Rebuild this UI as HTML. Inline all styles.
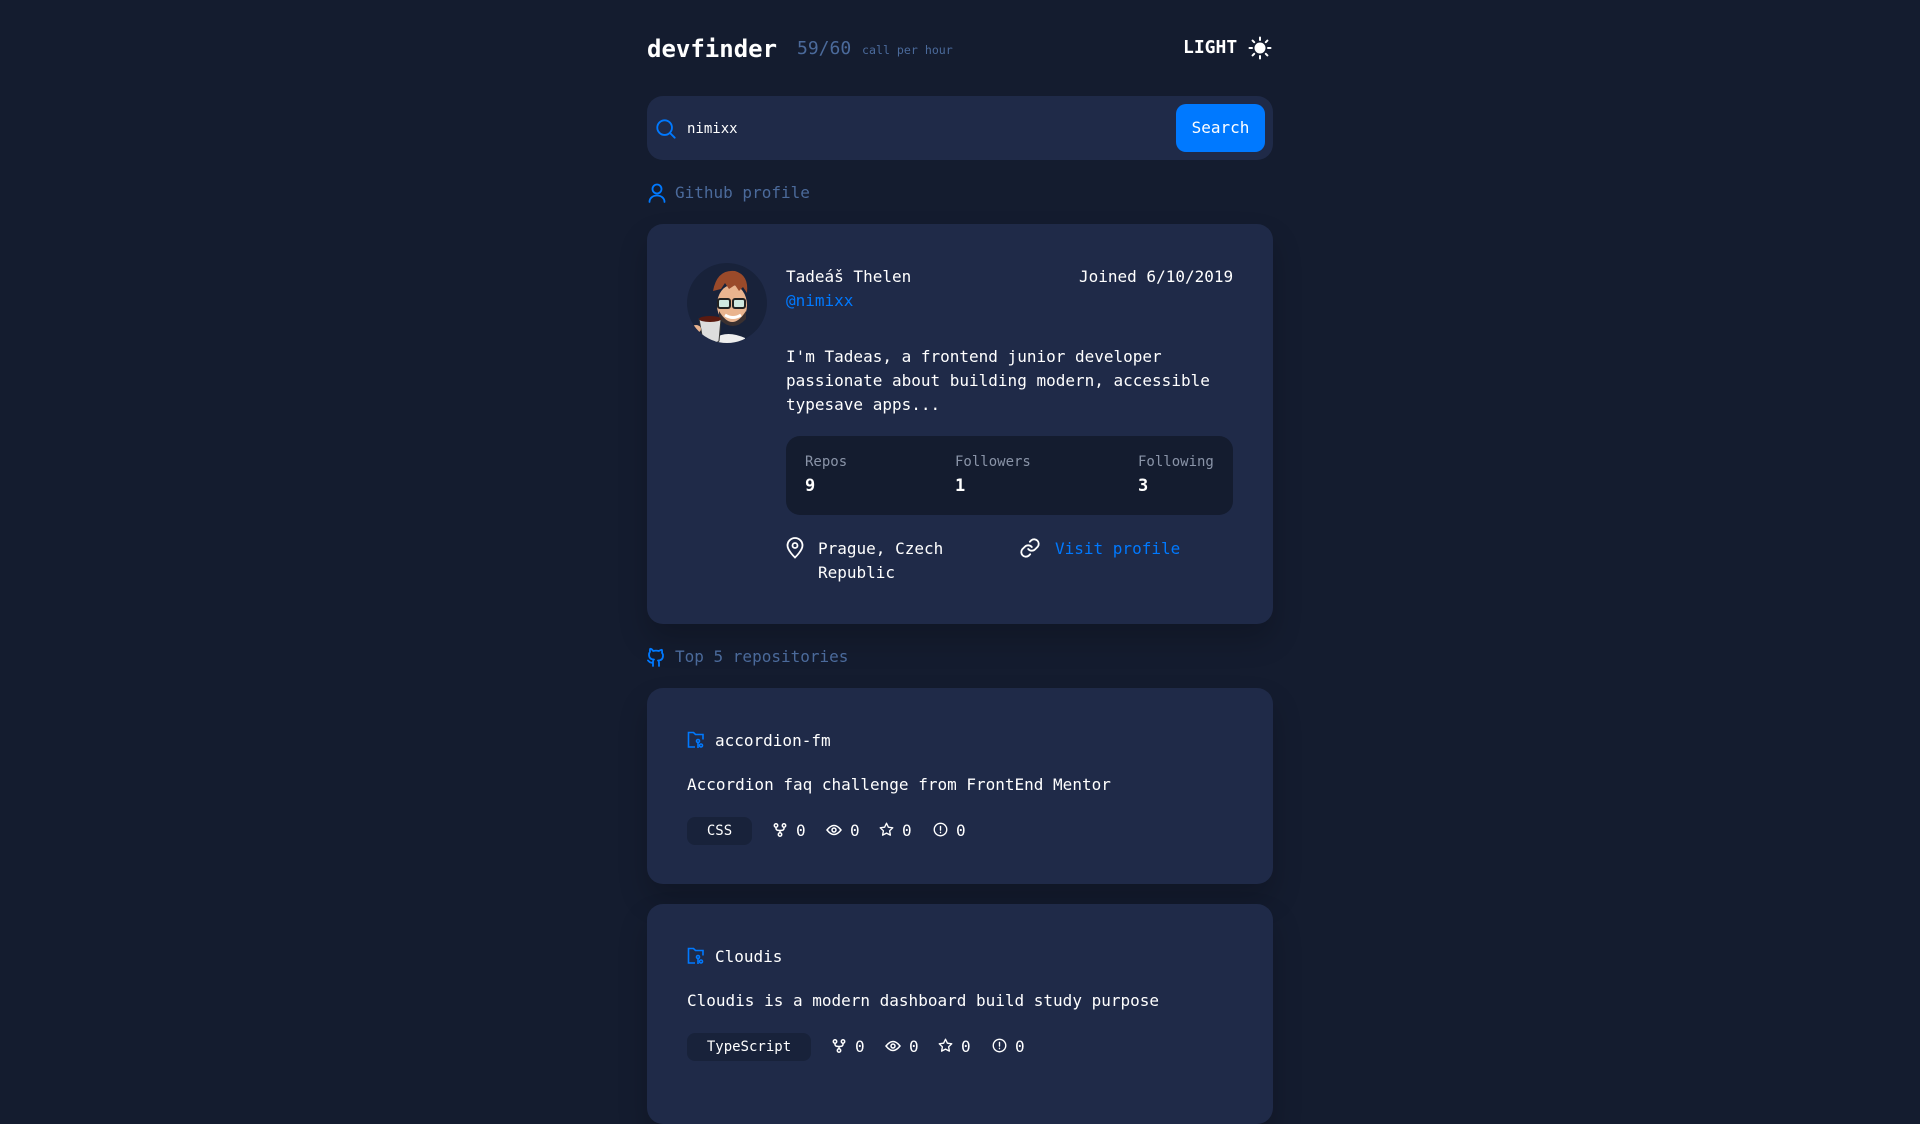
<!DOCTYPE html>
<html><head><meta charset="utf-8"><style>
*{margin:0;padding:0;box-sizing:border-box}
body{width:1920px;height:1080px;background:#141c2f;font-family:"DejaVu Sans Mono","Liberation Mono",monospace;color:#fff;position:relative;overflow:hidden}
.a{position:absolute;white-space:nowrap}
.card{position:absolute;left:647px;width:626px;background:#1f2a48;border-radius:16px;box-shadow:0 16px 30px rgba(0,0,0,.2)}
.lbl{color:#4b6a9b;font-size:16px}
.sl{color:#8a94a8;font-size:14px}
.sv{font-size:17px;font-weight:bold}
.badge{position:absolute;background:#18223a;border-radius:8px;font-size:14px;text-align:center;line-height:28px;height:28px}
.st{font-size:16px;line-height:22px}
svg{position:absolute}
</style></head><body>
<div class="a" style="left:647px;top:31px;font-size:24px;font-weight:bold;line-height:36px">devfinder</div>
<div class="a" style="left:797px;top:37px;font-size:18px;color:#4b6a9b;line-height:24px">59/60 <span style="font-size:11.6px">call per hour</span></div>
<div class="a" style="left:1183px;top:36px;font-size:18px;font-weight:bold;line-height:24px">LIGHT</div>
<svg style="left:1248px;top:36px" width="24" height="24" viewBox="0 0 24 24" fill="none" stroke="#fff" stroke-width="2" stroke-linecap="round"><circle cx="12" cy="12" r="4.5" fill="#fff"/><path d="M12 1.5v2.5M12 20v2.5M1.5 12h2.5M20 12h2.5M4.6 4.6l1.6 1.6M17.8 17.8l1.6 1.6M4.6 19.4l1.6-1.6M17.8 6.2l1.6-1.6"/></svg>

<div class="card" style="top:96px;height:64px;box-shadow:none"></div>
<svg style="left:655px;top:118px" width="22" height="22" viewBox="0 0 24 24" fill="none" stroke="#0079ff" stroke-width="2" stroke-linecap="round"><circle cx="10.5" cy="10.5" r="8"/><path d="M16.5 16.5l5 5"/></svg>
<div class="a" style="left:687px;top:119px;font-size:14px;line-height:20px">nimixx</div>
<div class="a" style="left:1176px;top:104px;width:89px;height:48px;background:#0079ff;border-radius:10px;font-size:16px;line-height:48px;text-align:center">Search</div>

<svg style="left:648px;top:183px" width="18" height="20" viewBox="0 0 18 20" fill="none" stroke="#0079ff" stroke-width="1.8" stroke-linecap="round"><circle cx="9" cy="6" r="4.5"/><path d="M1.5 19c0-4 3.4-6.5 7.5-6.5s7.5 2.5 7.5 6.5"/></svg>
<div class="a lbl" style="left:675px;top:183px;line-height:20px">Github profile</div>

<div class="card" style="top:224px;height:400px"></div>
<svg style="left:687px;top:263px" width="80" height="80" viewBox="0 0 80 80"><defs><clipPath id="c"><circle cx="40" cy="40" r="40"/></clipPath></defs><circle cx="40" cy="40" r="40" fill="#18223a"/><g clip-path="url(#c)"><path d="M28 75 q12-8 30 0 v10 h-30z" fill="#eee"/><ellipse cx="45" cy="42" rx="15" ry="20" fill="#e9b48f"/><path d="M32 48 q13 22 27 0 v8 q-13 14-27 0z" fill="#3a3030"/><path d="M26 28 q4-22 22-20 q14 4 12 22 l-4-6 -4 4 -4-6 -6 4 -4-6 -4 6z" fill="#9a4a2a"/><rect x="31" y="36" width="12" height="9" rx="2" fill="#cfe8e0" stroke="#222" stroke-width="2"/><rect x="46" y="36" width="12" height="9" rx="2" fill="#cfe8e0" stroke="#222" stroke-width="2"/><path d="M38 52 q8 5 16 0" stroke="#fff" stroke-width="3" fill="none"/><path d="M12 56 l4 22 q8 6 16 0 l2-22z" fill="#ddd" stroke="#333" stroke-width="1"/><ellipse cx="23" cy="56" rx="11" ry="3" fill="#5a1a10"/><ellipse cx="9" cy="66" rx="5" ry="4" fill="#e9b48f"/></g></svg>
<div class="a" style="left:786px;top:265px;font-size:16px;line-height:24px">Tadeáš Thelen</div>
<div class="a" style="left:786px;top:289px;font-size:16px;line-height:24px;color:#0079ff">@nimixx</div>
<div class="a" style="left:1079px;top:265px;font-size:16px;line-height:24px">Joined 6/10/2019</div>
<div class="a" style="left:786px;top:345px;font-size:16px;line-height:24px;white-space:normal;width:440px">I'm Tadeas, a frontend junior developer passionate about building modern, accessible typesave apps...</div>
<div class="a" style="left:786px;top:436px;width:447px;height:79px;background:#141c2f;border-radius:14px"></div>
<div class="a sl" style="left:805px;top:454px">Repos</div>
<div class="a sv" style="left:805px;top:476px">9</div>
<div class="a sl" style="left:955px;top:454px">Followers</div>
<div class="a sv" style="left:955px;top:476px">1</div>
<div class="a sl" style="left:1138px;top:454px">Following</div>
<div class="a sv" style="left:1138px;top:476px">3</div>
<svg style="left:785px;top:537px" width="20" height="22" viewBox="0 0 20 22" fill="none" stroke="#fff" stroke-width="1.8"><path d="M10 20.5s-7.5-7-7.5-12a7.5 7.5 0 0 1 15 0c0 5-7.5 12-7.5 12z"/><circle cx="10" cy="8.5" r="2.5"/></svg>
<div class="a" style="left:818px;top:537px;font-size:16px;line-height:24px">Prague, Czech<br>Republic</div>
<svg style="left:1019px;top:537px" width="22" height="22" viewBox="0 0 24 24" fill="none" stroke="#fff" stroke-width="2" stroke-linecap="round"><path d="M10 13a5 5 0 0 0 7.5.5l3-3a5 5 0 0 0-7-7l-1.7 1.7"/><path d="M14 11a5 5 0 0 0-7.5-.5l-3 3a5 5 0 0 0 7 7l1.7-1.7"/></svg>
<div class="a" style="left:1055px;top:537px;font-size:16px;line-height:24px;color:#0079ff">Visit profile</div>

<svg style="left:647px;top:647px" width="18" height="20" viewBox="0 0 18 20" fill="none" stroke="#0079ff" stroke-width="1.8" stroke-linecap="round" stroke-linejoin="round"><path d="M6 19v-3.5c-3.5 1-4-1.5-5-2M12 19v-3c0-1 0-2-1-2.5 3 0 5-1.5 5-5 0-1-.4-2-1-2.7.2-1 .2-2-.2-3-1 0-2 .6-3 1.2a11 11 0 0 0-5.6 0C5.2 2.4 4.2 1.8 3.2 1.8c-.4 1-.4 2-.2 3-.6.7-1 1.7-1 2.7 0 3.5 2 5 5 5-1 .5-1 1.5-1 2.5"/></svg>
<div class="a lbl" style="left:675px;top:647px;line-height:20px">Top 5 repositories</div>

<!-- repo 1 -->
<div class="card" style="top:688px;height:196px"></div>
<svg style="left:687px;top:731px" width="18" height="18" viewBox="0 0 18 18" fill="none" stroke="#0079ff" stroke-width="1.6"><path d="M8 16H1.5V1.5h5l2 2h7.5v5"/><circle cx="11" cy="10" r="1.5"/><circle cx="14" cy="14.5" r="1.5"/><path d="M11 11.5v5.5"/></svg>
<div class="a" style="left:715px;top:730px;font-size:16px;line-height:22px">accordion-fm</div>
<div class="a" style="left:687px;top:774px;font-size:16px;line-height:22px">Accordion faq challenge from FrontEnd Mentor</div>
<div class="badge" style="left:687px;top:817px;width:65px">CSS</div>
<svg style="left:773px;top:823px" width="14" height="14" viewBox="0 0 14 14" fill="none" stroke="#fff" stroke-width="1.5"><circle cx="3" cy="2.5" r="1.7"/><circle cx="11" cy="2.5" r="1.7"/><circle cx="7" cy="11.5" r="1.7"/><path d="M3 4.2v1.3q0 2 4 2t4-2V4.2M7 7.5v2.3"/></svg>
<div class="a st" style="left:796px;top:820px">0</div>
<svg style="left:826px;top:823px" width="16" height="14" viewBox="0 0 16 14" fill="none" stroke="#fff" stroke-width="1.5"><path d="M1 7q7-9 14 0-7 9-14 0z"/><circle cx="8" cy="7" r="2"/></svg>
<div class="a st" style="left:850px;top:820px">0</div>
<svg style="left:879px;top:822px" width="15" height="15" viewBox="0 0 24 24" fill="none" stroke="#fff" stroke-width="2.2" stroke-linejoin="round"><path d="M12 2l3 6.3 7 1-5 4.8 1.2 6.9L12 17.8 5.8 21l1.2-6.9-5-4.8 7-1z"/></svg>
<div class="a st" style="left:902px;top:820px">0</div>
<svg style="left:933px;top:822px" width="15" height="15" viewBox="0 0 24 24" fill="none" stroke="#fff" stroke-width="2.2" stroke-linecap="round"><circle cx="12" cy="12" r="10"/><path d="M12 7v6M12 16.5v.5"/></svg>
<div class="a st" style="left:956px;top:820px">0</div>

<!-- repo 2 -->
<div class="card" style="top:904px;height:220px"></div>
<svg style="left:687px;top:947px" width="18" height="18" viewBox="0 0 18 18" fill="none" stroke="#0079ff" stroke-width="1.6"><path d="M8 16H1.5V1.5h5l2 2h7.5v5"/><circle cx="11" cy="10" r="1.5"/><circle cx="14" cy="14.5" r="1.5"/><path d="M11 11.5v5.5"/></svg>
<div class="a" style="left:715px;top:946px;font-size:16px;line-height:22px">Cloudis</div>
<div class="a" style="left:687px;top:990px;font-size:16px;line-height:22px">Cloudis is a modern dashboard build study purpose</div>
<div class="badge" style="left:687px;top:1033px;width:124px">TypeScript</div>
<svg style="left:832px;top:1039px" width="14" height="14" viewBox="0 0 14 14" fill="none" stroke="#fff" stroke-width="1.5"><circle cx="3" cy="2.5" r="1.7"/><circle cx="11" cy="2.5" r="1.7"/><circle cx="7" cy="11.5" r="1.7"/><path d="M3 4.2v1.3q0 2 4 2t4-2V4.2M7 7.5v2.3"/></svg>
<div class="a st" style="left:855px;top:1036px">0</div>
<svg style="left:885px;top:1039px" width="16" height="14" viewBox="0 0 16 14" fill="none" stroke="#fff" stroke-width="1.5"><path d="M1 7q7-9 14 0-7 9-14 0z"/><circle cx="8" cy="7" r="2"/></svg>
<div class="a st" style="left:909px;top:1036px">0</div>
<svg style="left:938px;top:1038px" width="15" height="15" viewBox="0 0 24 24" fill="none" stroke="#fff" stroke-width="2.2" stroke-linejoin="round"><path d="M12 2l3 6.3 7 1-5 4.8 1.2 6.9L12 17.8 5.8 21l1.2-6.9-5-4.8 7-1z"/></svg>
<div class="a st" style="left:961px;top:1036px">0</div>
<svg style="left:992px;top:1038px" width="15" height="15" viewBox="0 0 24 24" fill="none" stroke="#fff" stroke-width="2.2" stroke-linecap="round"><circle cx="12" cy="12" r="10"/><path d="M12 7v6M12 16.5v.5"/></svg>
<div class="a st" style="left:1015px;top:1036px">0</div>
</body></html>
